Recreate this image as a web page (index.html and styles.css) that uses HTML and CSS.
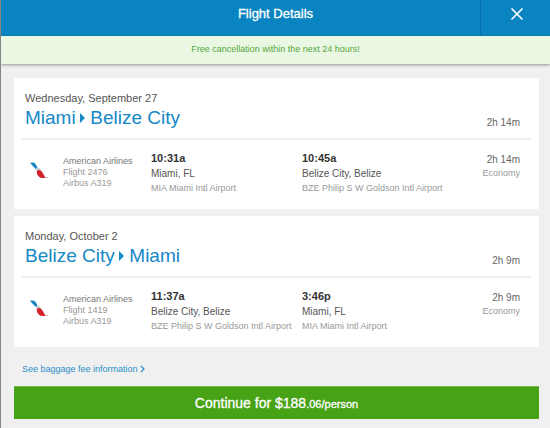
FILE: index.html
```html
<!DOCTYPE html>
<html lang="en">
<head>
    <meta charset="UTF-8">
    <meta name="viewport" content="width=device-width, initial-scale=1.0">
    <title>Flight Details</title>
    <link rel="stylesheet" href="styles.css">
</head>
<body>

    <header class="header">
        <h1>Flight Details</h1>
        <button type="button" class="close" aria-label="Close">
            <svg width="12" height="12" viewBox="0 0 12 12"><path d="M1 1l10 10M11 1L1 11" stroke="#fff" stroke-width="1.7" stroke-linecap="round"/></svg>
        </button>
    </header>

    <p class="notice">Free cancellation within the next 24 hours!</p>

    <main class="content">
        <section class="card">
            <div class="summary">
                <div>
                    <p class="date">Wednesday, September 27</p>
                    <h2 class="route">Miami <span class="arrow"></span> Belize City</h2>
                </div>
                <p class="duration">2h 14m</p>
            </div>
            <div class="leg">
                <svg class="logo" width="20" height="18" viewBox="0 0 20 18">
                    <path d="M1 .5h3.5C6.500 1 7.500 3.500 8.500 5.500L7 7C5 5.500 3 3.500 1 .5z" fill="#1b86c2"/>
                    <path d="M7 7l1.500-1.500 3.500 1.500-1 1.500-3.500.5z" fill="#c3cbd1"/>
                    <path d="M8 8.500l3-.5c2 1 4 5 5.500 8H12c-2.500-1-5-4-4-7.500z" fill="#d3222a"/>
                    <path d="M16 15.500h3" stroke="#e0b5b7"/>
                </svg>
                <div class="airline">
                    <p class="carrier">American Airlines</p>
                    <p>Flight 2476</p>
                    <p>Airbus A319</p>
                </div>
                <div class="stop">
                    <p class="time">10:31a</p>
                    <p class="city">Miami, FL</p>
                    <p class="airport">MIA Miami Intl Airport</p>
                </div>
                <div class="stop">
                    <p class="time">10:45a</p>
                    <p class="city">Belize City, Belize</p>
                    <p class="airport">BZE Philip S W Goldson Intl Airport</p>
                </div>
                <div class="cabin">
                    <p class="duration">2h 14m</p>
                    <p>Economy</p>
                </div>
            </div>
        </section>

        <section class="card">
            <div class="summary">
                <div>
                    <p class="date">Monday, October 2</p>
                    <h2 class="route">Belize City <span class="arrow"></span> Miami</h2>
                </div>
                <p class="duration">2h 9m</p>
            </div>
            <div class="leg">
                <svg class="logo" width="20" height="18" viewBox="0 0 20 18">
                    <path d="M1 .5h3.5C6.500 1 7.500 3.500 8.500 5.500L7 7C5 5.500 3 3.500 1 .5z" fill="#1b86c2"/>
                    <path d="M7 7l1.500-1.500 3.500 1.500-1 1.500-3.500.5z" fill="#c3cbd1"/>
                    <path d="M8 8.500l3-.5c2 1 4 5 5.500 8H12c-2.500-1-5-4-4-7.500z" fill="#d3222a"/>
                    <path d="M16 15.500h3" stroke="#e0b5b7"/>
                </svg>
                <div class="airline">
                    <p class="carrier">American Airlines</p>
                    <p>Flight 1419</p>
                    <p>Airbus A319</p>
                </div>
                <div class="stop">
                    <p class="time">11:37a</p>
                    <p class="city">Belize City, Belize</p>
                    <p class="airport">BZE Philip S W Goldson Intl Airport</p>
                </div>
                <div class="stop">
                    <p class="time">3:46p</p>
                    <p class="city">Miami, FL</p>
                    <p class="airport">MIA Miami Intl Airport</p>
                </div>
                <div class="cabin">
                    <p class="duration">2h 9m</p>
                    <p>Economy</p>
                </div>
            </div>
        </section>

        <a class="baggage" href="#">See baggage fee information
            <svg width="5" height="8" viewBox="0 0 5 8"><path d="M1 1l3 3-3 3" fill="none" stroke="#2b8fc9" stroke-width="1.2"/></svg>
        </a>

        <button type="button" class="continue">Continue for <b>$188</b><small>.06/person</small></button>
    </main>

</body>
</html>
```

FILE: styles.css
```css
* {
    box-sizing: border-box;
}

body {
    margin: 0;
    min-height: 100vh;
    border-left: 1px solid #858585;
    background-color: #f0f0f0;
    color: #555;
    font-family: "Liberation Sans", Arial, sans-serif;
    font-size: 9px;
    line-height: 11px;
}

h1, h2, p {
    margin: 0;
    font-weight: normal;
}

.header {
    display: grid;
    grid-template-columns: 70px 1fr 70px;
    height: 36px;
    background-color: #0a84c1;
    color: #fff;
}

.header h1 {
    grid-column: 2;
    font-size: 13px;
    line-height: 28px;
    text-align: center;
    -webkit-text-stroke: 0.3px #fff;
}

.close {
    padding: 0 0 8px 2px;
    border: none;
    border-left: 1px solid #0870b0;
    background: none;
    cursor: pointer;
}

.close svg {
    display: block;
    margin: 0 auto;
}

.notice {
    padding: 8px 0 9px;
    background-color: #eaf7e3;
    box-shadow: 0 1px 3px rgba(0, 0, 0, 0.4);
    color: #55a83a;
    text-align: center;
}

.content {
    padding: 14px 11px 10px 13px;
}

.card {
    margin-bottom: 7px;
    padding: 0 8px;
    background-color: #fff;
}

.summary {
    display: flex;
    justify-content: space-between;
    align-items: flex-end;
    padding: 12px 11px 8px 3px;
    border-bottom: 2px solid #eee;
}

.date {
    font-size: 11px;
    line-height: 16px;
}

.route {
    color: #1588c6;
    font-size: 19px;
    line-height: 24px;
}

.arrow {
    display: inline-block;
    margin: 0 0 1px -1px;
    border: 5px solid transparent;
    border-left-color: #1588c6;
    border-right: none;
}

.duration {
    color: #666;
    font-size: 10px;
    line-height: 14px;
}

.leg {
    display: grid;
    grid-template-columns: 34px 88px 151px 1fr auto;
    padding: 11px 11px 14px 7px;
    color: #999;
}

.logo {
    margin-top: 11px;
}

.airline {
    padding-top: 5px;
}

.carrier {
    color: #777;
}

.stop {
    white-space: nowrap;
}

.time {
    color: #333;
    font-size: 11px;
    font-weight: bold;
    line-height: 15px;
}

.city {
    font-size: 10px;
    line-height: 16px;
    color: #555;
}

.airport {
    line-height: 13px;
}

.cabin {
    text-align: right;
}

.cabin .duration {
    line-height: 17px;
}

.baggage {
    display: inline-block;
    margin: 10px 8px 11px;
    color: #2b8fc9;
    text-decoration: none;
}

.baggage svg {
    vertical-align: -1px;
}

.continue {
    display: block;
    width: 100%;
    height: 33px;
    padding: 0;
    border: 1px solid #6fba4c;
    border-width: 1px 0 0;
    background-color: #48a216;
    color: #fff;
    font-family: inherit;
    font-size: 14px;
    -webkit-text-stroke: 0.3px #fff;
    cursor: pointer;
}

.continue b {
    font-weight: normal;
}

.continue small {
    font-size: 11px;
}
```
